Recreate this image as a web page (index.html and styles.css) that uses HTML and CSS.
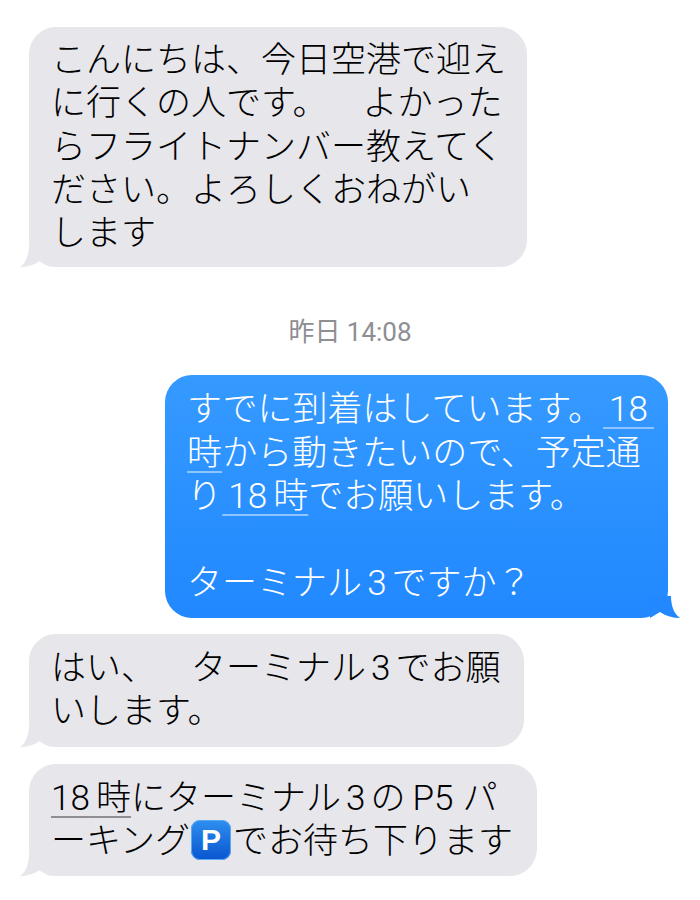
FILE: index.html
```html
<!DOCTYPE html>
<html lang="ja">
<head>
    <meta charset="UTF-8">
    <meta name="viewport" content="width=device-width, initial-scale=1.0">
    <title>メッセージ</title>
    <link rel="stylesheet" href="styles.css">
</head>
<body>
    <div class="thread">
        <div class="bubble received">
            こんにちは、今日空港で迎え<br>
            に行くの人です。　よかった<br>
            らフライトナンバー教えてく<br>
            ださい。よろしくおねがい<br>
            します
            <svg class="tail" viewBox="0 0 30 22"><path d="M9 0 C9 10 6 18 0 22 C7 22 14 20 20 16 L30 22 L30 0 Z"/></svg>
        </div>

        <div class="time">昨日 14:08</div>

        <div class="bubble sent">
            すでに到着はしています。<span class="link first-num"><span class="gap">&thinsp;</span>18<span class="gap">&thinsp;</span></span><br>
            <span class="link">時</span>から動きたいので、予定通<br>
            り<span class="link"><span class="gap">&thinsp;</span>18<span class="gap">&thinsp;</span>時</span>でお願いします。<br>
            <br>
            ターミナル<span class="num">3</span>ですか？
            <svg class="tail" viewBox="0 0 30 22"><path d="M21 0 C21 10 24 18 30 22 C23 22 16 20 10 16 L0 22 L0 0 Z"/></svg>
        </div>

        <div class="bubble received after-sent">
            はい、　ターミナル<span class="num">3</span>でお願<br>
            いします。
            <svg class="tail" viewBox="0 0 30 22"><path d="M9 0 C9 10 6 18 0 22 C7 22 14 20 20 16 L30 22 L30 0 Z"/></svg>
        </div>

        <div class="bubble received last">
            <span class="link">18<span class="gap">&thinsp;</span>時</span>にターミナル<span class="num">3</span>の<span class="num num-wide">P5</span>パ<br>
            ーキング<span class="parking">P</span>でお待ち下ります
            <svg class="tail" viewBox="0 0 30 22"><path d="M9 0 C9 10 6 18 0 22 C7 22 14 20 20 16 L30 22 L30 0 Z"/></svg>
        </div>
    </div>
</body>
</html>
```

FILE: styles.css
```css
body {
    margin: 0;
    background-color: #fff;
    font-family: "Roboto", "Noto Sans CJK JP", "Liberation Sans", sans-serif;
}
.thread {
    display: flex;
    flex-direction: column;
    align-items: flex-start;
    padding: 27px 32px 0 29px;
}
.bubble {
    position: relative;
    padding: 12px 21px 12px 22px;
    border-radius: 27px;
    font-size: 35px;
    font-weight: 300;
    line-height: 43.3px;
    white-space: nowrap;
    text-spacing-trim: space-all;
}
.received {
    background-color: #e6e6eb;
    color: #000;
}
.sent {
    align-self: flex-end;
    padding: 13px 20px 13px 22px;
    background: linear-gradient(#359aff, #2188ff);
    color: #fff;
}
.after-sent {
    margin-top: 16px;
    padding: 13px 24px 13px 22px;
}
.last {
    margin-top: 17px;
    padding: 13px 24px 13px 22px;
}
.time {
    align-self: center;
    margin: 49px 0 26px 3px;
    color: #8e8e93;
    font-size: 26px;
    line-height: 33px;
}
.link {
    text-decoration: underline;
    text-decoration-thickness: 2px;
    text-underline-offset: 6px;
}
.gap {
    font-size: 30px;
    line-height: 0;
}
.num {
    padding: 0 5px;
}
.num-wide {
    padding: 0 9px 0 7px;
}
.first-num {
    margin-right: -6px;
}
.received .link {
    text-decoration-color: #8e8e93;
}
.sent .link {
    text-decoration-color: #8fc4ff;
}
.parking {
    display: inline-block;
    width: 40px;
    height: 40px;
    margin: 0 2px 0 1px;
    border-radius: 9px;
    background: linear-gradient(#2e8ff0, #0a55cf);
    box-shadow: inset 0 0 0 1px #5aa9f5;
    color: #fff;
    font-family: "Liberation Sans", sans-serif;
    font-size: 30px;
    font-weight: 700;
    line-height: 40px;
    text-align: center;
    vertical-align: 3px;
}
.tail {
    position: absolute;
    bottom: 0;
    width: 30px;
    height: 22px;
}
.received .tail {
    left: -9px;
    fill: #e6e6eb;
}
.sent .tail {
    right: -12px;
    fill: #2188ff;
}
```
